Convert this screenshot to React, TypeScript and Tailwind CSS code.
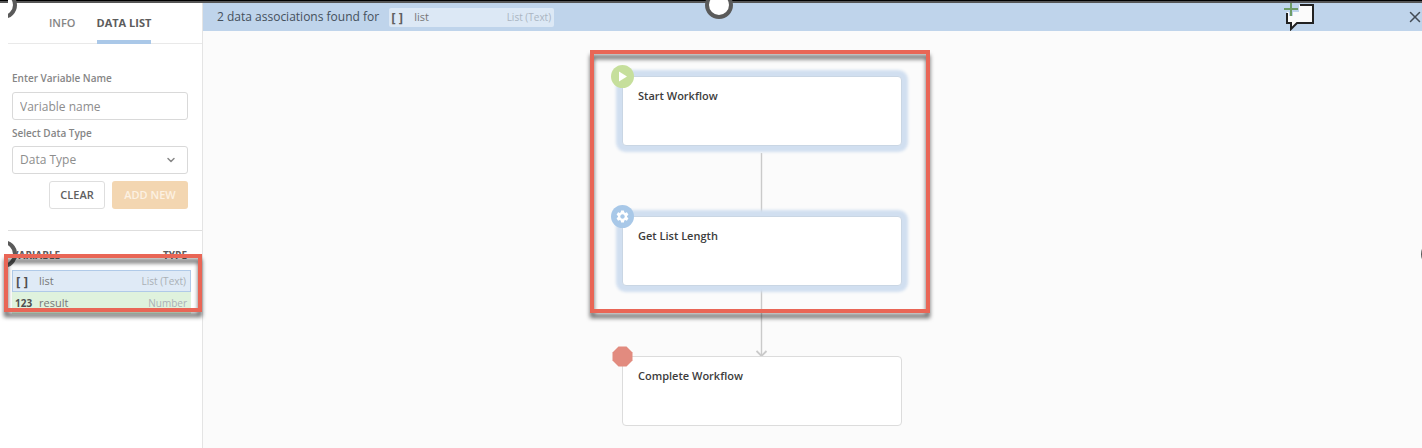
import type { ReactNode } from "react";
import { ChevronDown, X } from "lucide-react";
import { MdSettings } from "react-icons/md";

const variables = [
  { id: "list", glyph: "[ ]", name: "list", type: "List (Text)", selected: true },
  { id: "result", glyph: "123", name: "result", type: "Number", selected: false },
];

function Handle({ className }: { className: string }) {
  return <span aria-hidden="true" className={`absolute block size-7 rounded-full border-4 border-[#5a5a5a] bg-white ${className}`} />;
}

function Highlight({ className }: { className: string }) {
  return (
    <div
      aria-hidden="true"
      className={`pointer-events-none absolute border-4 border-[#e96656] drop-shadow-[0_5px_2px_rgba(0,0,0,0.6)] ${className}`}
    />
  );
}

function Node({ title, className, active, icon }: { title: string; className: string; active?: boolean; icon: ReactNode }) {
  return (
    <section
      className={`absolute left-[419px] h-[70px] w-[280px] rounded border bg-white px-[15px] py-3 ${
        active ? "border-[#c9d6e4] shadow-[0_0_3px_6px_#d1dff0]" : "border-[#dcdcdc]"
      } ${className}`}
    >
      <span className="absolute -top-3 -left-3">{icon}</span>
      <h2 className="text-[11px] leading-[14px] font-semibold text-[#3c3c3c]">{title}</h2>
    </section>
  );
}

function Sidebar() {
  return (
    <aside className="relative flex w-[203px] shrink-0 flex-col border-r border-[#e4e4e4] bg-white pl-2">
      <nav className="flex h-[41px] gap-[21px] border-b border-[#e9e9e9] pl-[41px] text-[11px]">
        <a href="#info" className="pt-3 leading-[15px] font-semibold text-[#858585]">INFO</a>
        <a href="#data" className="h-[41px] border-b-4 border-[#aac8e8] pt-3 leading-[15px] font-bold text-[#5c5c5c]">DATA LIST</a>
      </nav>
      <form className="flex flex-col pt-7 pr-[14px] pl-1" onSubmit={(e) => e.preventDefault()}>
        <label htmlFor="variable" className="text-[10px] leading-3 font-semibold text-[#858585]">Enter Variable Name</label>
        <input
          id="variable"
          placeholder="Variable name"
          className="mt-2 h-7 w-full rounded-[3px] border border-[#d9d9d9] px-[7px] text-[12px] text-[#666] placeholder:text-[#8d8d8d]"
        />
        <label htmlFor="datatype" className="mt-[7px] text-[10px] leading-3 font-semibold text-[#858585]">Select Data Type</label>
        <div className="relative mt-[7px]">
          <select
            id="datatype"
            className="h-7 w-full appearance-none rounded-[3px] border border-[#d9d9d9] bg-white px-[7px] text-[12px] text-[#8d8d8d]"
          >
            <option>Data Type</option>
            <option>Text</option>
            <option>Number</option>
            <option>List (Text)</option>
          </select>
          <ChevronDown size={12} strokeWidth={3} className="pointer-events-none absolute top-2 right-[11px] text-[#888]" />
        </div>
        <div className="mt-[7px] flex justify-end gap-[7px] text-[11px] font-semibold">
          <button type="button" className="h-7 w-14 rounded-[3px] border border-[#dedede] text-[#606060]">CLEAR</button>
          <button type="submit" className="h-7 w-[76px] rounded-[3px] bg-[#f3d6b1] text-[#fcf1e2]">ADD NEW</button>
        </div>
      </form>
      <div className="mt-[21px] border-t border-[#dedede] pt-[18px] pr-[11px] pl-1">
        <table className="w-full border-separate border-spacing-0 text-[11px]">
          <thead>
            <tr className="h-[21px] align-top text-[10px] leading-3 text-[#5a5a5a]">
              <th colSpan={2} scope="col" className="text-left font-bold">VARIABLE</th>
              <th scope="col" className="pr-1 text-right font-bold">TYPE</th>
            </tr>
          </thead>
          <tbody>
            {variables.map((v) => (
              <tr
                key={v.id}
                className={
                  v.selected
                    ? "h-[22px] bg-[#dfeaf6] *:border-y *:border-[#b0cae8] *:first:border-l *:last:border-r"
                    : "h-[22px] bg-[#dff2dd]"
                }
              >
                <td className={`w-[27px] pl-[3px] leading-4 font-bold text-[#505050] ${v.selected ? "text-[13px]" : "text-[10px]"}`}>
                  {v.glyph}
                </td>
                <td className="leading-4 text-[#777]">{v.name}</td>
                <td className="pr-1 text-right text-[10px] leading-4 text-[#aab0b5]">{v.type}</td>
              </tr>
            ))}
          </tbody>
        </table>
      </div>
      <div aria-hidden="true" className="pointer-events-none absolute -top-[3px] bottom-0 left-2 w-3 overflow-hidden">
        <Handle className="-top-[9px] -left-[19px]" />
        <Handle className="top-[240px] -left-[19px]" />
      </div>
      <Highlight className="top-[251px] right-0 left-1 h-[58px]" />
    </aside>
  );
}

export default function App() {
  return (
    <div className="relative flex min-h-screen flex-col overflow-hidden bg-white font-['Open_Sans',sans-serif]">
      <div className="h-[3px] shrink-0 border-b-2 border-[#555] bg-black" />
      <div className="flex flex-1">
        <Sidebar />
        <main className="flex min-w-0 flex-1 flex-col bg-[#fbfbfb]">
          <header className="flex h-7 shrink-0 items-center bg-[#bfd4eb] pl-[14px]">
            <p className="text-[12px] leading-4 text-[#45505c]">2 data associations found for</p>
            <div className="ml-[10px] flex h-[19px] w-[165px] items-center rounded-[2px] bg-[#dce8f5] pr-[3px] pl-[2px] text-[11px]">
              <span className="w-[23px] text-[13px] leading-4 font-bold text-[#606060]">[ ]</span>
              <span className="text-[#777]">list</span>
              <span className="ml-auto text-[10px] text-[#aab5c2]">List (Text)</span>
            </div>
            <button type="button" aria-label="Add comment" className="ml-auto">
              <svg width="30" height="28" viewBox="0 0 30 28" fill="none">
                <path d="M3 9V20H7V26L13 20H29V2H15V9Z" fill="#fbfbfb" />
                <path d="M3 10V20H7V26L13 20H29V2H16" stroke="#222" strokeWidth="2" />
                <path d="M0 6H14M7 0V13" stroke="#bfd4eb" strokeWidth="4" />
                <path d="M0 6H14M7 0V13" stroke="#6f9d67" strokeWidth="2" />
              </svg>
            </button>
            <button type="button" aria-label="Close" className="ml-[92px] text-[#444c55]">
              <X size={18} strokeWidth={2} className="-mr-[2px]" />
            </button>
          </header>
          <div className="relative flex-1">
            <svg width="12" height="204" viewBox="0 0 12 204" fill="none" stroke="#cacaca" className="absolute top-[122px] left-[553px]">
              <path d="M5.5 0V203" strokeWidth="1.4" />
              <path d="M0.5 198L5.5 203L10.5 198" strokeWidth="1.8" />
            </svg>
            <Node
              title="Start Workflow"
              active
              className="top-[45px]"
              icon={
                <svg width="23" height="23" viewBox="0 0 23 23">
                  <circle cx="11.5" cy="11.5" r="11.5" fill="#c6df9c" />
                  <path d="M8 6.5V16.5L16 11.5Z" fill="#fff" />
                </svg>
              }
            />
            <Node
              title="Get List Length"
              active
              className="top-[185px]"
              icon={
                <span className="grid size-[23px] place-items-center rounded-full bg-[#a8c8e8] text-white">
                  <MdSettings size={15} />
                </span>
              }
            />
            <Node
              title="Complete Workflow"
              className="top-[325px]"
              icon={
                <svg width="23" height="23" viewBox="0 0 23 23">
                  <path d="M7.5 1.5H15.5L21.5 7.5V15.5L15.5 21.5H7.5L1.5 15.5V7.5Z" fill="#e28b7f" />
                </svg>
              }
            />
            <Highlight className="top-[19px] left-[387px] h-[263px] w-[340px]" />
          </div>
        </main>
      </div>
      <Handle className="-top-[9px] left-1/2 -translate-x-[6px]" />
      <Handle className="top-[240px] -right-[27px]" />
    </div>
  );
}
